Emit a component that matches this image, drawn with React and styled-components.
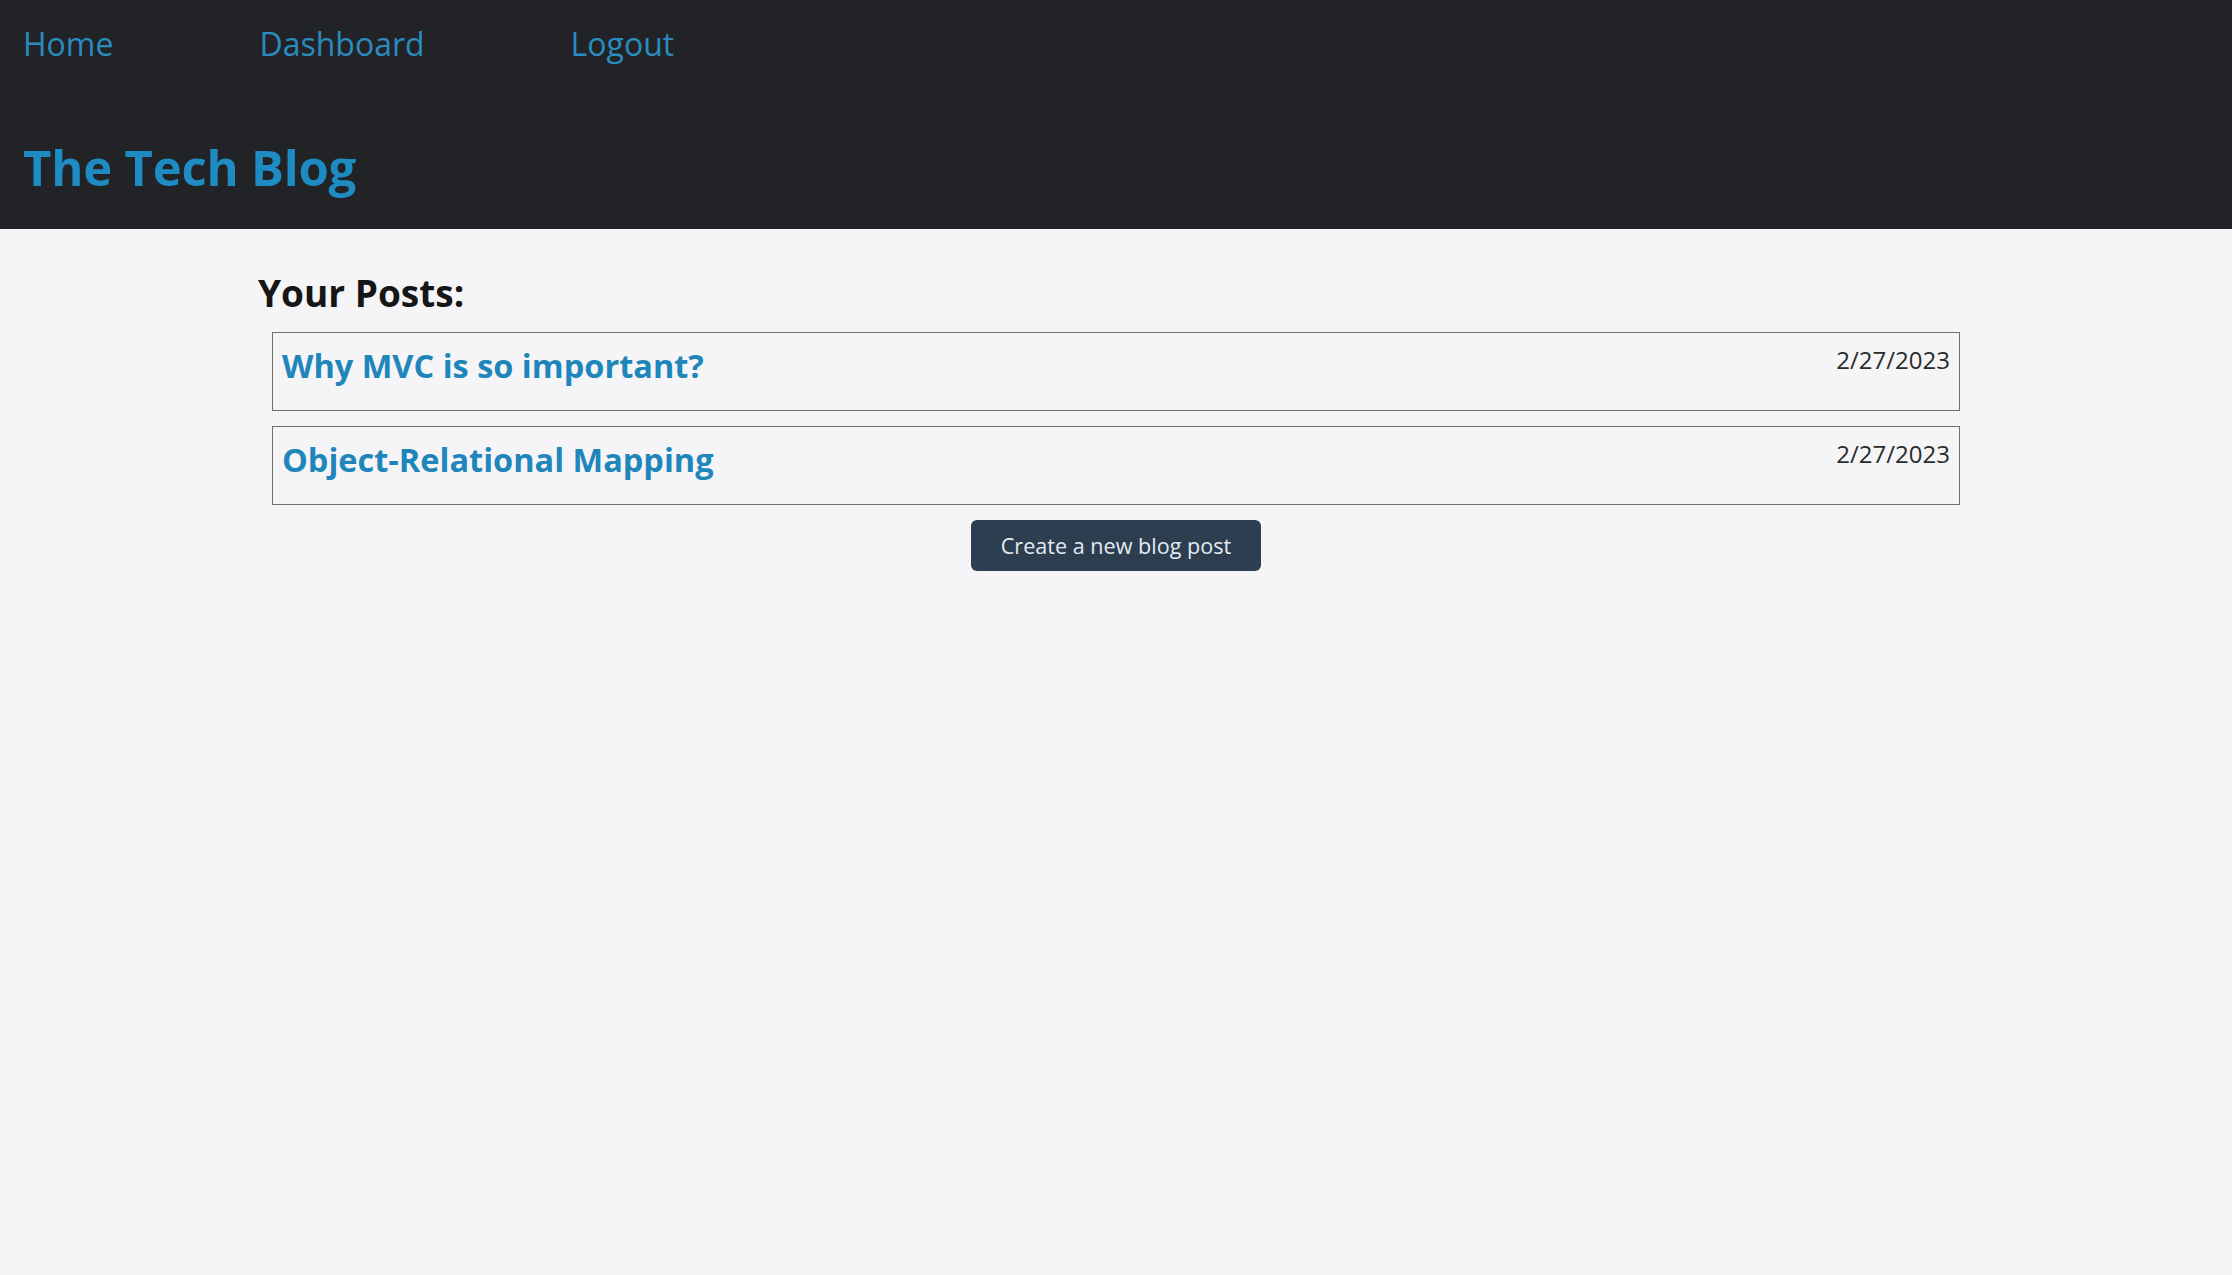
import React from 'react'
import styled, { createGlobalStyle } from 'styled-components'

const GlobalStyle = createGlobalStyle`
    html, body {
        margin: 0;
        padding: 0;
        background: #f5f5f7;
        font-family: "Open Sans", "Noto Sans", sans-serif;
    }
    * {
        box-sizing: border-box;
    }
`;

const posts = [
    { id: 1, title: 'Why MVC is so important?', date: '2/27/2023' },
    { id: 2, title: 'Object-Relational Mapping', date: '2/27/2023' },
];

export default function App() {
    return (
        <>
            <GlobalStyle />
            <Header>
                <Nav>
                    <NavLink href="#">Home</NavLink>
                    <NavLink href="#">Dashboard</NavLink>
                    <NavLink href="#">Logout</NavLink>
                </Nav>
                <Title>The Tech Blog</Title>
            </Header>

            <Main>
                <Heading>Your Posts:</Heading>
                <PostList>
                    {posts.map(post => (
                        <PostCard key={post.id}>
                            <PostTitle href="#">{post.title}</PostTitle>
                            <PostDate>{post.date}</PostDate>
                        </PostCard>
                    ))}
                </PostList>
                <ButtonRow>
                    <NewPostButton>Create a new blog post</NewPostButton>
                </ButtonRow>
            </Main>
        </>
    )
}

const Header = styled.header`
    background: #222326;
    height: 229px;
    padding: 16px 23px 27px;
    display: flex;
    flex-direction: column;
    justify-content: space-between;
`;

const Nav = styled.nav`
    display: flex;
    gap: 146px;
    line-height: 56px;
`;

const NavLink = styled.a`
    color: #2a8bbf;
    font-size: 32px;
    font-weight: 400;
    text-decoration: none;
`;

const Title = styled.h1`
    margin: 0;
    color: #1e8bc3;
    font-size: 49px;
    font-weight: 700;
    line-height: 70px;
    letter-spacing: -0.2px;
`;

const Main = styled.main`
    width: 1716px;
    margin: 39px auto 0;
`;

const Heading = styled.h2`
    margin: 0 0 14px;
    color: #161616;
    font-size: 37px;
    font-weight: 700;
    line-height: 50px;
`;

const PostList = styled.div`
    display: flex;
    flex-direction: column;
    gap: 15px;
    margin: 0 14px;
`;

const PostCard = styled.div`
    display: flex;
    justify-content: space-between;
    align-items: flex-start;
    height: 79px;
    padding: 11px 9px 0;
    border: 1px solid #6e6e6e;
`;

const PostTitle = styled.a`
    color: #1f86bb;
    font-size: 32.5px;
    font-weight: 700;
    line-height: 44px;
    text-decoration: none;
`;

const PostDate = styled.span`
    color: #2b2b2b;
    font-size: 24px;
    line-height: 32px;
`;

const ButtonRow = styled.div`
    display: flex;
    justify-content: center;
    margin-top: 15px;
`;

const NewPostButton = styled.button`
    width: 290px;
    height: 51px;
    border: none;
    border-radius: 6px;
    background: #2c3e50;
    color: #e3ebf2;
    font-family: "Open Sans", "Noto Sans", sans-serif;
    font-size: 21.6px;
    cursor: pointer;
`;
